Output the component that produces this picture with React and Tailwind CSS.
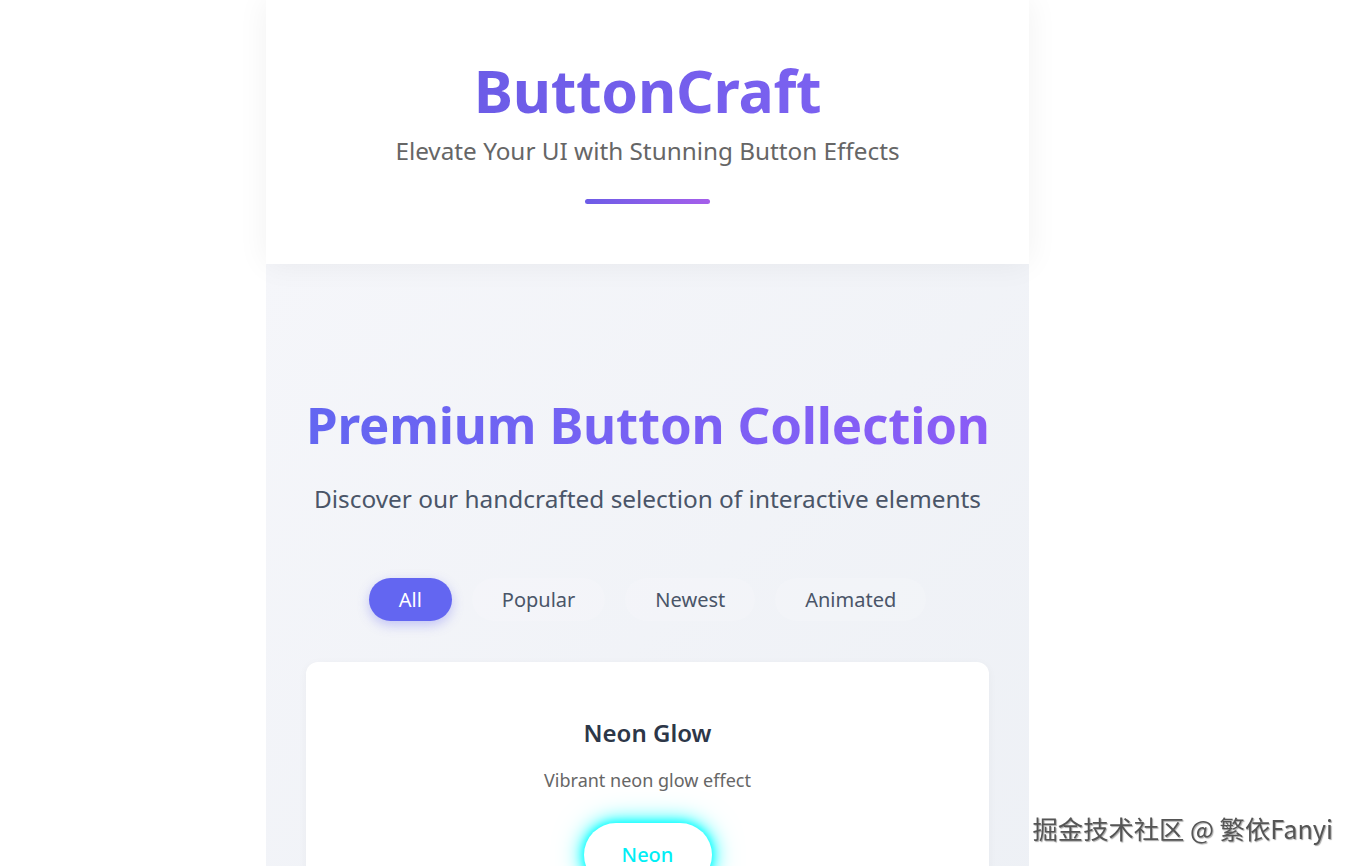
import React, { useState } from 'react';

const filters = ['All', 'Popular', 'Newest', 'Animated'];

export default function App() {
  const [active, setActive] = useState('All');

  return (
    <div className="min-h-screen bg-white font-['Noto_Sans',sans-serif]">
      <div className="ml-[266px] w-[763px]">
        {/* header */}
        <header className="relative z-10 flex h-[264px] flex-col items-center bg-white pt-[55px] shadow-[0_0_30px_rgba(0,0,0,0.06)]">
          <h1 className="bg-gradient-to-r from-[#6c5ce7] to-[#7b61f0] bg-clip-text text-[59px] font-bold leading-[1.2] tracking-[-0.3px] text-transparent">
            ButtonCraft
          </h1>
          <p className="mt-[9px] text-[24.3px] leading-[1.3] text-[#666]">Elevate Your UI with Stunning Button Effects</p>
          <div className="mt-[33px] h-[5px] w-[125px] rounded-full bg-gradient-to-r from-[#6c5ce7] to-[#a55eea]" />
        </header>

        {/* collection */}
        <section className="bg-gradient-to-br from-[#f5f6fa] to-[#edf0f5] px-10 pt-[130px] pb-10">
          <h2 className="whitespace-nowrap bg-gradient-to-r from-[#6366f1] to-[#8b5cf6] bg-clip-text text-center text-[51px] font-bold leading-[1.2] tracking-[-0.2px] text-transparent">
            Premium Button Collection
          </h2>
          <p className="mt-[27px] text-center text-[24.4px] leading-[1.4] text-[#4a5568]">
            Discover our handcrafted selection of interactive elements
          </p>

          <div className="mt-[62px] flex justify-center gap-5">
            {filters.map((f) => (
              <button
                key={f}
                onClick={() => setActive(f)}
                className={
                  active === f
                    ? 'h-[43px] rounded-full bg-[#6366f1] px-[30px] text-[20px] text-white shadow-[0_4px_12px_rgba(99,102,241,0.35)]'
                    : 'h-[43px] rounded-full bg-[rgba(255,255,255,0.15)] px-[30px] text-[20px] text-[#4a5568]'
                }
              >
                {f}
              </button>
            ))}
          </div>

          <div className="mt-[41px] flex h-[300px] flex-col items-center rounded-xl bg-white pt-[54px] shadow-[0_2px_10px_rgba(0,0,0,0.04)]">
            <h3 className="text-[24px] font-semibold leading-[1.4] text-[#2d3748]">Neon Glow</h3>
            <p className="mt-[18px] text-[18px] leading-[1.4] text-[#666]">Vibrant neon glow effect</p>
            <button className="mt-[30px] h-[64px] w-[128px] rounded-full bg-white text-[20px] font-medium text-[#00eef5] shadow-[0_0_8px_#0ff,0_0_18px_#0ff,0_0_30px_rgba(0,255,255,0.5)]">
              Neon
            </button>
          </div>
        </section>
      </div>

      <div className="fixed bottom-[25px] right-[24px] font-['Noto_Sans_CJK_SC',sans-serif] text-[25.3px] leading-none text-[#555] [text-shadow:1px_1px_1px_rgba(0,0,0,0.35)]">
        掘金技术社区 @ 繁依Fanyi
      </div>
    </div>
  );
}
